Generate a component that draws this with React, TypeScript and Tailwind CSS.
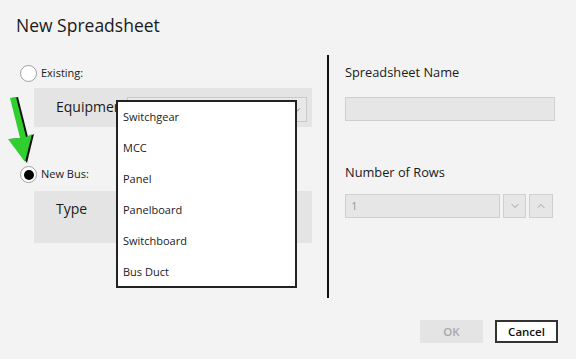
import React from 'react';
import { ChevronDown, ChevronUp } from 'lucide-react';

const Radio: React.FC<{ checked?: boolean; label: string }> = ({ checked, label }) => (
  <div className="flex items-center h-[17px]">
    <div className="w-[17px] h-[17px] rounded-full border-[1.5px] border-[#a0a0a0] bg-white flex items-center justify-center">
      {checked && <div className="w-[10px] h-[10px] rounded-full bg-black" />}
    </div>
    <span className="ml-[4px] text-[11px] text-[#1a1a1a]">{label}</span>
  </div>
);

const App: React.FC = () => {
  const items = ['Switchgear', 'MCC', 'Panel', 'Panelboard', 'Switchboard', 'Bus Duct'];

  return (
    <div className="relative w-[576px] h-[359px] overflow-hidden bg-[#f3f3f3] text-[#1a1a1a] font-['Open_Sans','Noto_Sans',sans-serif]">
      {/* Title */}
      <div className="pt-[12px] pl-[16px] h-[55px] text-[17.5px] leading-[26px]">New Spreadsheet</div>

      <div className="flex">
        {/* Left column */}
        <div className="w-[312px] pl-[20px] pt-[10px]">
          <Radio label="Existing:" />
          <div className="mt-[6px] ml-[14px] h-[39px] bg-[#e4e4e4] flex items-start">
            <span className="w-[93px] pl-[22px] pt-[9px] text-[14px] leading-[20px] whitespace-nowrap">Equipment</span>
            <div className="mt-[9px] w-[180px] h-[25px] border border-[#c9c9c9] bg-[#e8e8e8] flex items-center justify-end pr-[4px]">
              <ChevronDown size={10} className="text-[#777]" />
            </div>
          </div>

          <div className="mt-[39px]">
            <Radio checked label="New Bus:" />
          </div>
          <div className="mt-[8px] ml-[14px] h-[52px] bg-[#e4e4e4]">
            <span className="block pl-[22px] pt-[8px] text-[14px] leading-[20px]">Type</span>
          </div>
        </div>

        {/* Divider */}
        <div className="ml-[15px] w-[2px] h-[243px] bg-[#111]" />

        {/* Right column */}
        <div className="pl-[16px] pt-[7px] w-[224px]">
          <div className="text-[12.8px] leading-[20px]">Spreadsheet Name</div>
          <div className="mt-[15px] w-[210px] h-[24px] bg-[#e6e6e6] border border-[#cfcfcf]" />
          <div className="mt-[41px] text-[12.8px] leading-[20px]">Number of Rows</div>
          <div className="mt-[12px] flex gap-[3px]">
            <div className="w-[157px] h-[24px] bg-[#e6e6e6] border border-[#cfcfcf] pl-[5px] text-[11.5px] leading-[22px] text-[#9a9a9a]">1</div>
            <div className="w-[24px] h-[24px] bg-[#e6e6e6] border border-[#cfcfcf] flex items-center justify-center">
              <ChevronDown size={12} strokeWidth={1.5} className="text-[#888]" />
            </div>
            <div className="w-[24px] h-[24px] bg-[#e6e6e6] border border-[#cfcfcf] flex items-center justify-center">
              <ChevronUp size={12} strokeWidth={1.5} className="text-[#888]" />
            </div>
          </div>
        </div>
      </div>

      {/* Footer buttons */}
      <div className="mt-[22px] flex justify-end gap-[12px] pr-[18px]">
        <button className="w-[63px] h-[23px] bg-[#e4e4e4] text-[11.5px] font-semibold text-[#a8a8a8]">OK</button>
        <button className="w-[63px] h-[23px] bg-white border-2 border-[#333] text-[11.5px] font-semibold text-[#111]">Cancel</button>
      </div>

      {/* Open dropdown list */}
      <div className="absolute left-[116px] top-[100px] w-[181px] h-[188px] bg-white border-2 border-[#222]">
        {items.map(item => (
          <div key={item} className="h-[31px] pl-[5px] flex items-center text-[11px] text-[#1a1a1a]">{item}</div>
        ))}
      </div>

      {/* Green pointer arrow */}
      <svg className="absolute left-0 top-[90px]" width="40" height="80" viewBox="0 0 40 80">
        <polygon points="12,8 18,7 28,47 34,44 27,73 10,49 22,48" fill="#111" />
        <polygon points="10,8 16,7 26,47 32,44 25,72 8,49 20,48" fill="#2fcf2f" />
      </svg>
    </div>
  );
};

export default App;
